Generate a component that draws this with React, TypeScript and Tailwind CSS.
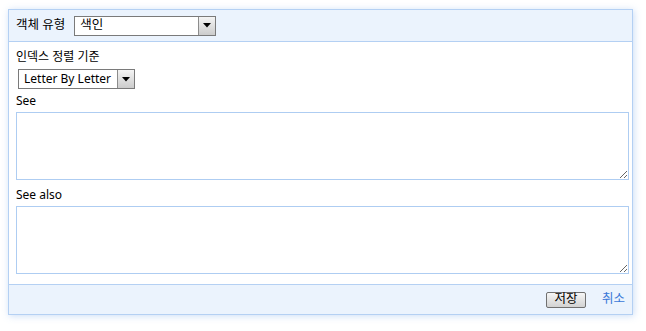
import { FC } from "react";

const font = {
  fontFamily: '"Noto Sans", "Noto Sans CJK KR", sans-serif',
};

const FakeSelect: FC<{ value: string; className: string; textClass: string }> = ({
  value,
  className,
  textClass,
}) => {
  return (
    <div
      className={`flex items-stretch h-[20px] bg-white border border-[#7a7a7a] ${className}`}
    >
      <div
        className={`flex-1 flex items-center pl-[5px] text-black leading-none whitespace-nowrap overflow-hidden ${textClass}`}
      >
        {value}
      </div>
      <div className="w-[17px] flex items-center justify-center border-l border-[#8c8c8c] bg-gradient-to-b from-[#f4f4f4] to-[#cccccc]">
        <svg width="8" height="5" viewBox="0 0 8 5">
          <path d="M0 0 L8 0 L4 4.5 Z" fill="#000" />
        </svg>
      </div>
    </div>
  );
};

const App: FC = () => {
  return (
    <div className="w-[646px] h-[331px] bg-white pt-[9px] pl-[8px]" style={font}>
      <div className="w-[625px] border border-[#b4d0f3] shadow-[1px_1px_7px_rgba(140,180,235,0.45)] bg-white">
        {/* header */}
        <div className="h-[32px] flex items-center gap-[9px] pl-[7px] bg-[#ebf3fd] border-b border-[#b4d0f3]">
          <span className="text-[12.5px] text-black">객체 유형</span>
          <FakeSelect value="색인" className="w-[142px]" textClass="text-[12.5px]" />
        </div>

        {/* body */}
        <div className="pl-[7px] pr-[3px] pt-[7px] pb-[10px]">
          <div className="h-[16px] leading-[16px] text-[12px] text-black">인덱스 정렬 기준</div>
          <FakeSelect
            value="Letter By Letter"
            className="w-[117px] ml-[2px] mt-[4px]"
            textClass="text-[12px]"
          />
          <div className="h-[16px] leading-[16px] text-[12px] text-black mt-[4px]">See</div>
          <textarea className="block w-full h-[68px] mt-[3px] border border-[#aecdf2] bg-white outline-none resize" />
          <div className="h-[16px] leading-[16px] text-[12px] text-black mt-[7px]">See also</div>
          <textarea className="block w-full h-[68px] mt-[3px] border border-[#aecdf2] bg-white outline-none resize" />
        </div>

        {/* footer */}
        <div className="h-[30px] flex items-center justify-end gap-[16px] pr-[7px] bg-[#ebf3fd] border-t border-[#b4d0f3]">
          <button className="h-[16px] w-[40px] flex items-center justify-center rounded-[2px] border border-[#707070] bg-gradient-to-b from-[#f6f6f6] to-[#d2d2d2] text-[12.5px] leading-none text-black">
            저장
          </button>
          <a href="#" className="text-[12.5px] text-[#3a78d8] no-underline">
            취소
          </a>
        </div>
      </div>
    </div>
  );
};

export default App;
